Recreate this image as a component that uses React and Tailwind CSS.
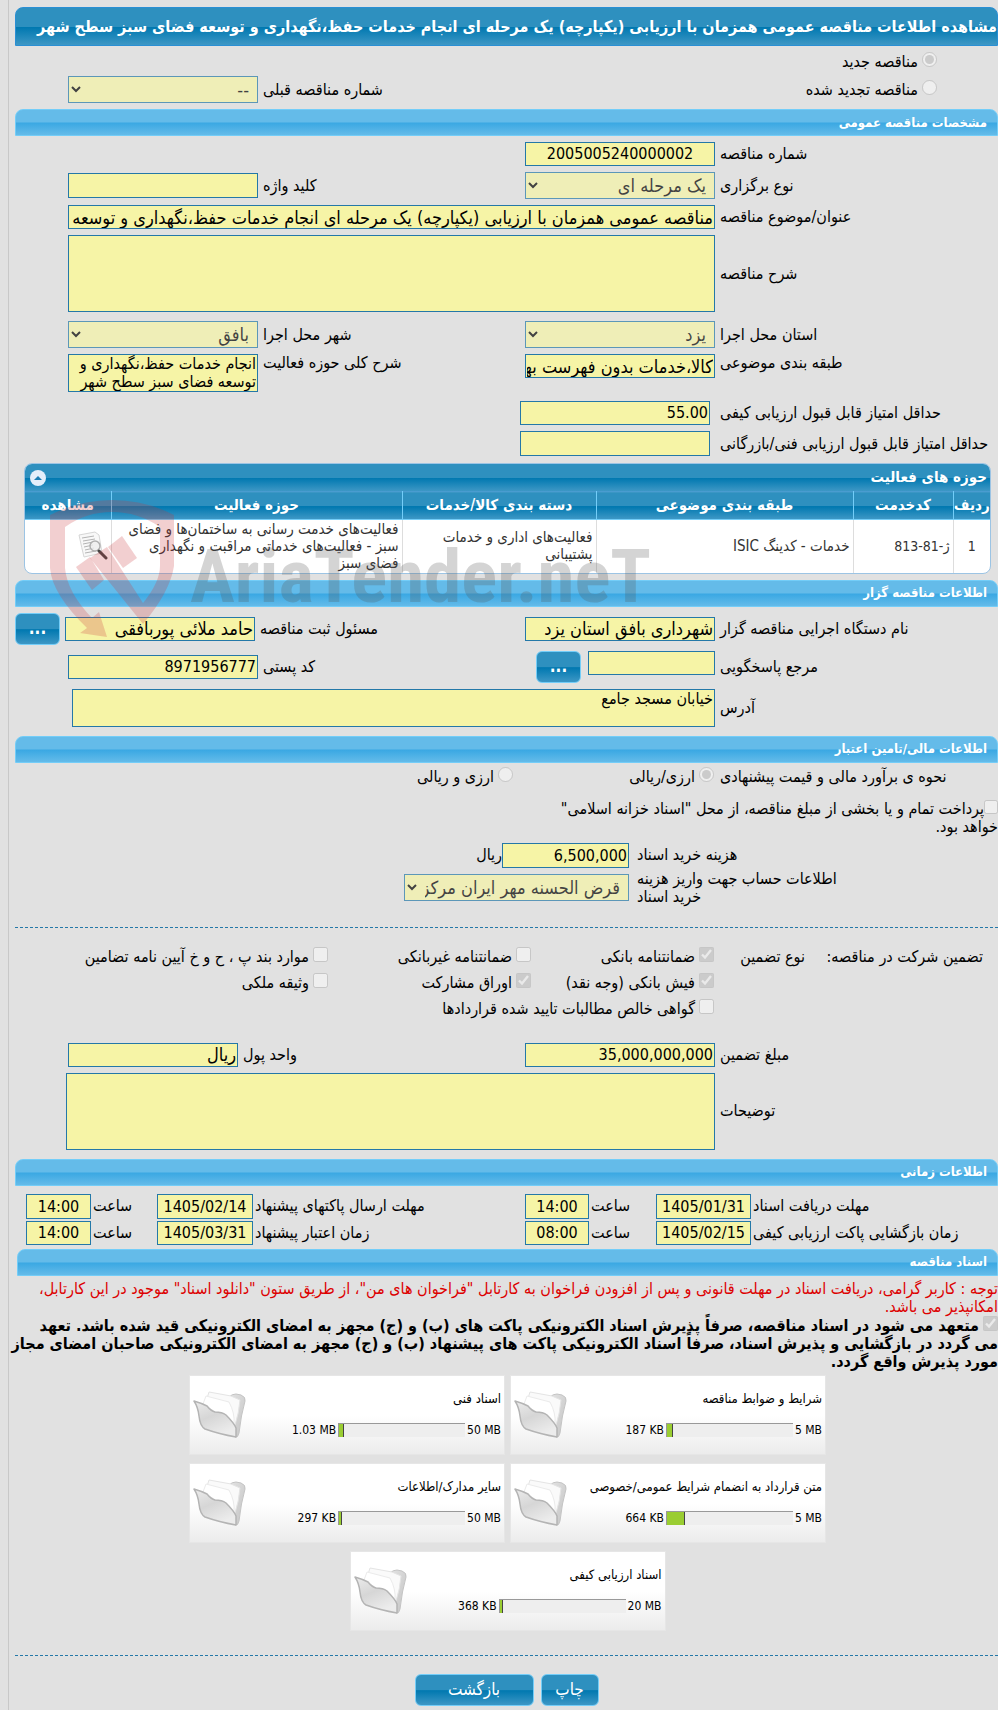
import React from 'react';

const fieldClass = 'block w-full min-w-0 border border-[#2478a8] bg-[#f6f4a6] px-px text-black outline-none';

const TextField = ({ id, value = '', className = 'h-6', align = 'text-right', dir = 'rtl', size = 'text-[16px]' }) => (
    <input id={id} type="text" dir={dir} readOnly value={value} className={`${fieldClass} ${align} ${size} ${className}`} />
);

const TextArea = ({ id, value = '', className = '' }) => (
    <textarea id={id} readOnly value={value} className={`${fieldClass} resize-none overflow-hidden text-[16px] leading-[18px] ${className}`} />
);

const SelectField = ({ id, value }) => (
    <select id={id} disabled className="block h-[27px] w-full border border-[#2478a8] bg-[#f6f4a6] px-1 text-[18px] leading-6 text-black opacity-70">
        <option>{value}</option>
    </select>
);

const Label = ({ htmlFor, children, className = '' }) => (
    <label htmlFor={htmlFor} className={`block text-left text-[16px] leading-[18px] whitespace-nowrap ${className}`}>{children}</label>
);

const Check = ({ type = 'checkbox', name, checked = false, children, className = '' }) => (
    <label className={`flex items-start gap-1 text-[16px] leading-[18px] ${className}`}>
        <input type={type} name={name} disabled defaultChecked={checked} className="size-[15px] shrink-0" />
        <span className="pt-px whitespace-nowrap">{children}</span>
    </label>
);

const SectionBar = ({ children, className = '' }) => (
    <h2 className={`flex h-[27px] items-center rounded-t-lg border border-[#73cdf8] bg-[linear-gradient(to_bottom,#64bbe9_0%,#64bbe9_48%,#3aa8e3_52%,#64bbe9_100%)] pr-2.5 text-[13px] font-bold text-white ${className}`}>
        {children}
    </h2>
);

const blueFill = 'bg-[linear-gradient(to_bottom,#2e90bf_0%,#2e90bf_50%,#0078b0_52%,#3d97c5_100%)]';

const BlueButton = ({ children, className = '', ...props }) => (
    <button type="button" className={`h-8 rounded-md border border-[#73cdf8] text-[17px] text-white ${blueFill} ${className}`} {...props}>
        {children}
    </button>
);

const FolderIcon = () => (
    <svg viewBox="0 0 53 48" className="h-12 w-[53px]" aria-hidden="true">
        <defs>
            <linearGradient id="folderFront" x1="0" y1="0" x2="0.5" y2="1">
                <stop offset="0" stopColor="#ececec" />
                <stop offset="0.5" stopColor="#d6d6d6" />
                <stop offset="1" stopColor="#ececec" />
            </linearGradient>
            <linearGradient id="folderBack" x1="0" y1="0" x2="1" y2="1">
                <stop offset="0" stopColor="#e4e4e4" />
                <stop offset="1" stopColor="#c4c4c4" />
            </linearGradient>
        </defs>
        <path d="M36 6 Q39 3 43 3 L48 4 Q53 6 52 10 Q48 24 46 42 Q45 47 42 46 L34 24Z" fill="url(#folderBack)" stroke="#c4c4c4" />
        <path d="M12 14 L16 1 L38 5 L47 9 Q46 22 42 34 L30 26Z" fill="#fafafa" stroke="#e4e4e4" />
        <path d="M10 13 L13 5 L36 11 Q42 22 41 33 L30 26Z" fill="#fff" stroke="#ebebeb" />
        <path d="M1 10 Q8 12 14 15 Q18 20 22 21 Q29 21 33 24 Q41 32 43 37 L43 46 Q26 43 12 38 Q7 35 6 25 Q5 16 1 10Z" fill="url(#folderFront)" stroke="#b4b4b4" strokeWidth="1.5" strokeLinejoin="round" />
    </svg>
);

const ViewIcon = () => (
    <svg viewBox="0 0 30 30" className="size-[30px]" aria-hidden="true">
        <path d="M1 4 L17 1 L21 4 L24 22 L6 26 Q4 18 1 4Z" fill="#f8f8f8" stroke="#d6d6d6" />
        <path d="M4 7l12-2M5 10l12-2M5 13l10-2M6 16l9-2M7 19l9-2M7 22l11-2" stroke="#b4b4b4" />
        <circle cx="17" cy="15" r="5" fill="#eeeeeecc" stroke="#b0b0b0" strokeWidth="1.5" />
        <path d="M21 20L28 27" stroke="#444" strokeWidth="3" strokeLinecap="round" />
    </svg>
);

const Watermark = () => (
    <svg viewBox="0 0 620 140" className="pointer-events-none absolute top-[37px] left-[35px] h-[140px] w-[620px]" aria-hidden="true">
        <g fill="#c8363c" fillOpacity="0.24">
            <path d="M0 15 Q30 0 62 0 Q95 0 124 15 L124 66 Q120 92 93 124 L40 58 L57 47 L93 103 Q110 82 110 66 L110 27 Q88 12 62 12 Q36 12 15 27 L15 68 Q17 92 42 118 L49 112 L57 137 L30 133 L37 128 Q2 94 0 68Z" />
            <path d="M58 47 L72 36 L87 58 L73 68Z" />
            <path d="M26 67 L40 57 L54 80 L42 90Z" />
        </g>
        <text x="140" y="102" direction="ltr" textAnchor="start" fontSize="75" className="font-['Liberation_Sans_Narrow','Roboto_Condensed',sans-serif] font-bold" fill="#555" fillOpacity="0.25">AriaTender.neT</text>
    </svg>
);

const activityHead = ['ردیف', 'کدخدمت', 'طبقه بندی موضوعی', 'دسته بندی کالا/خدمات', 'حوزه فعالیت', 'مشاهده'];

const documents = [
    { title: 'شرایط و ضوابط مناقصه', limit: '5 MB', size: '187 KB', percent: 5 },
    { title: 'اسناد فنی', limit: '50 MB', size: '1.03 MB', percent: 4 },
    { title: 'متن قرارداد به انضمام شرایط عمومی/خصوصی', limit: '5 MB', size: '664 KB', percent: 14 },
    { title: 'سایر مدارک/اطلاعات', limit: '50 MB', size: '297 KB', percent: 2 },
    { title: 'اسناد ارزیابی کیفی', limit: '20 MB', size: '368 KB', percent: 3 },
];

const DocumentCard = ({ title, limit, size, percent }) => (
    <article className="flex h-20 w-[316px] items-center justify-between border border-[#e6e6e6] bg-linear-to-b from-white from-50% to-[#ececec] px-[3px]">
        <div className="flex flex-col gap-[15px] text-[12px] leading-4">
            <h3 className="text-[13px] leading-4">{title}</h3>
            <div className="flex items-center gap-[2px]">
                <span dir="ltr" className="whitespace-nowrap">{limit}</span>
                <div role="meter" aria-label={title} aria-valuenow={percent} dir="ltr" className="h-3.5 w-[127px] border-t border-l border-[#999] bg-[#eee]">
                    <div className="h-full border-r border-[#444] bg-[#9acd32]" style={{ width: `${percent}%` }} />
                </div>
                <span dir="ltr" className="whitespace-nowrap">{size}</span>
            </div>
        </div>
        <FolderIcon />
    </article>
);

const formGrid = 'grid grid-cols-[278px_190px_1fr_190px] gap-x-[5px] pl-[53px]';

const App = () => {
    return (
        <div dir="rtl" className="overflow-hidden bg-[#e1e1e1] pl-2 font-['DejaVu_Sans_Condensed','DejaVu_Sans',sans-serif] text-black">
            <main className="border-l border-[#c8c8c8] pt-[7px] pb-1 pl-1.5">
                <h1 className={`flex h-[39px] items-center rounded-t-lg border border-[#2a8fd4] text-[16px] font-bold whitespace-nowrap text-white ${blueFill}`}>
                    مشاهده اطلاعات مناقصه عمومی همزمان با ارزیابی (یکپارچه) یک مرحله ای انجام خدمات حفظ،نگهداری و توسعه فضای سبز سطح شهر
                </h1>

                {/* Tender kind */}
                <div className={`${formGrid} h-[63px] items-end pb-1.5`}>
                    <div className="col-span-2 flex flex-col gap-[9px] self-start pt-1.5 pr-[61px]">
                        <Check type="radio" name="kind" checked>مناقصه جدید</Check>
                        <Check type="radio" name="kind">مناقصه تجدید شده</Check>
                    </div>
                    <Label htmlFor="prevNumber" className="pb-1">شماره مناقصه قبلی</Label>
                    <SelectField id="prevNumber" value="--" />
                </div>

                <SectionBar>مشخصات مناقصه عمومی</SectionBar>
                <div className={`${formGrid} items-center gap-y-1.5 pt-1.5`}>
                    <Label htmlFor="number">شماره مناقصه</Label>
                    <TextField id="number" value="2005005240000002" align="text-center" />
                    <span className="col-span-2" />
                    <Label htmlFor="method">نوع برگزاری</Label>
                    <SelectField id="method" value="یک مرحله ای" />
                    <Label htmlFor="keyword">کلید واژه</Label>
                    <TextField id="keyword" className="h-[25px]" />
                    <Label htmlFor="subject">عنوان/موضوع مناقصه</Label>
                    <div className="col-span-3">
                        <TextField id="subject" size="text-[18px]" value="مناقصه عمومی همزمان با ارزیابی (یکپارچه) یک مرحله ای انجام خدمات حفظ،نگهداری و توسعه فضای سبز سطح شهر" />
                    </div>
                    <Label htmlFor="description">شرح مناقصه</Label>
                    <div className="col-span-3">
                        <TextArea id="description" className="h-[77px]" />
                    </div>
                </div>

                <div className={`${formGrid} items-center gap-y-1.5 pt-[9px]`}>
                    <Label htmlFor="province">استان محل اجرا</Label>
                    <SelectField id="province" value="یزد" />
                    <Label htmlFor="city">شهر محل اجرا</Label>
                    <SelectField id="city" value="بافق" />
                    <Label htmlFor="category" className="self-start">طبقه بندی موضوعی</Label>
                    <TextField id="category" size="text-[18px]" className="h-6 self-start" value="کالا،خدمات بدون فهرست بها" />
                    <Label htmlFor="scope" className="self-start">شرح کلی حوزه فعالیت</Label>
                    <TextArea id="scope" className="h-[38px]" value="انجام خدمات حفظ،نگهداری و توسعه فضای سبز سطح شهر" />
                </div>

                <div className="grid grid-cols-[278px_190px] items-center gap-x-2.5 gap-y-1.5 pt-[9px] pb-[7px]">
                    <Label htmlFor="minQuality">حداقل امتیاز قابل قبول ارزیابی کیفی</Label>
                    <TextField id="minQuality" value="55.00" />
                    <Label htmlFor="minTechnical">حداقل امتیاز قابل قبول ارزیابی فنی/بازرگانی</Label>
                    <TextField id="minTechnical" className="h-[25px]" />
                </div>

                {/* Activity areas */}
                <section className="relative">
                    <div className="mr-[7px] ml-[9px] overflow-hidden rounded-lg border border-[#9cc4e4] bg-white">
                        <div className={`flex h-[27px] items-center justify-between pr-[3px] pl-[5px] text-white ${blueFill}`}>
                            <h2 className="text-[15px] font-bold">حوزه های فعالیت</h2>
                            <button type="button" aria-label="بستن" className="flex size-4 items-center justify-center rounded-full bg-[#e4eefa]">
                                <svg viewBox="0 0 8 4" className="h-1 w-2"><path d="M0 4L4 0L8 4Z" fill="#1c7db4" /></svg>
                            </button>
                        </div>
                        <table className="w-full table-fixed border-collapse text-[15px] leading-[17px] text-[#333]">
                            <colgroup>
                                <col className="w-[37px]" />
                                <col className="w-[100px]" />
                                <col className="w-[257px]" />
                                <col className="w-[194px]" />
                                <col />
                                <col className="w-[86px]" />
                            </colgroup>
                            <thead>
                                <tr className={`h-7 border-t border-b border-t-[#4a9cd0] border-b-[#73cdf8] text-white ${blueFill}`}>
                                    {activityHead.map(head => (
                                        <th key={head} className="border-l border-[#73cdf8] font-bold whitespace-nowrap last:border-l-0">{head}</th>
                                    ))}
                                </tr>
                            </thead>
                            <tbody>
                                <tr className="h-[53px]">
                                    <td className="border-l border-[#ddd] text-center text-[14px]">1</td>
                                    <td className="border-l border-[#ddd] pr-[3px] text-[14px]">ژ-81-813</td>
                                    <td className="border-l border-[#ddd] pr-[3px]">خدمات - کدینگ ISIC</td>
                                    <td className="border-l border-[#ddd] pr-[3px] pl-6">فعالیت‌های اداری و خدمات پشتیبانی</td>
                                    <td className="border-l border-[#ddd] pr-[3px] pl-2">فعالیت‌های خدمت رسانی به ساختمان‌ها و فضای سبز - فعالیت‌های خدماتی مراقبت و نگهداری فضای سبز</td>
                                    <td className="pr-[3px]">
                                        <button type="button" aria-label="مشاهده" className="block"><ViewIcon /></button>
                                    </td>
                                </tr>
                            </tbody>
                        </table>
                    </div>
                    <Watermark />
                </section>

                <SectionBar className="mt-1.5">اطلاعات مناقصه گزار</SectionBar>
                <div className="grid grid-cols-[278px_190px_1fr_190px_45px] items-center gap-x-[5px] pt-1.5">
                    <Label htmlFor="agency">نام دستگاه اجرایی مناقصه گزار</Label>
                    <TextField id="agency" size="text-[18px]" value="شهرداری بافق استان یزد" />
                    <Label htmlFor="registrar">مسئول ثبت مناقصه</Label>
                    <TextField id="registrar" size="text-[18px]" value="حامد ملائی پوربافقی" />
                    <BlueButton className="font-bold" aria-label="انتخاب مسئول">...</BlueButton>
                </div>
                <div className={`${formGrid} items-center pt-1.5`}>
                    <Label htmlFor="responder">مرجع پاسخگویی</Label>
                    <div className="flex items-start gap-[7px]">
                        <div className="w-[127px]"><TextField id="responder" /></div>
                        <BlueButton className="w-[45px] font-bold" aria-label="انتخاب مرجع">...</BlueButton>
                    </div>
                    <Label htmlFor="postal">کد پستی</Label>
                    <TextField id="postal" value="8971956777" />
                </div>
                <div className="grid grid-cols-[278px_1fr] items-center gap-x-[5px] pt-1.5 pb-[9px] pl-[57px]">
                    <Label htmlFor="address">آدرس</Label>
                    <TextArea id="address" className="h-[38px]" value="خیابان مسجد جامع" />
                </div>

                <SectionBar>اطلاعات مالی/تامین اعتبار</SectionBar>
                <div className="flex items-start pt-1">
                    <span className="w-[278px] pt-px text-left text-[16px] leading-[18px] whitespace-nowrap">نحوه ی برآورد مالی و قیمت پیشنهادی</span>
                    <Check type="radio" name="currency" checked className="mr-1.5 w-[201px]">ارزی/ریالی</Check>
                    <Check type="radio" name="currency">ارزی و ریالی</Check>
                </div>
                <label className="block w-[470px] pt-3.5 text-[16px] leading-[18px]">
                    <input type="checkbox" disabled className="size-[14px]" />
                    پرداخت تمام و یا بخشی از مبلغ مناقصه، از محل "اسناد خزانه اسلامی" خواهد بود.
                </label>
                <div className="grid grid-cols-[361px_225px] items-center gap-x-2 gap-y-[2px] pt-[7px] pb-[21px]">
                    <Label htmlFor="price">هزینه خرید اسناد</Label>
                    <div className="flex items-center">
                        <div className="w-[127px]"><TextField id="price" className="h-[25px]" value="6,500,000" /></div>
                        <span className="text-[16px] leading-[18px]">ریال</span>
                    </div>
                    <div className="flex justify-end">
                        <label htmlFor="account" className="w-[210px] text-[16px] leading-[18px]">
                            <span className="block text-left">اطلاعات حساب جهت واریز هزینه</span>
                            <span className="block text-left">خرید اسناد</span>
                        </label>
                    </div>
                    <SelectField id="account" value="قرض الحسنه مهر ایران مرکزی" />
                </div>

                <hr className="border-dashed border-[#2478a8]" />
                <div className="grid grid-cols-[178px_106px_183px_203px_1fr] gap-y-[7px] pt-[19px]">
                    <span className="pt-px pr-[15px] text-[16px] leading-[18px] whitespace-nowrap">تضمین شرکت در مناقصه:</span>
                    <span className="pt-px pr-[15px] text-[16px] leading-[18px]">نوع تضمین</span>
                    <Check checked>ضمانتنامه بانکی</Check>
                    <Check>ضمانتنامه غیربانکی</Check>
                    <Check>موارد بند پ ، ح و خ آیین نامه تضامین</Check>
                    <Check checked className="col-start-3">فیش بانکی (وجه نقد)</Check>
                    <Check checked>اوراق مشارکت</Check>
                    <Check>وثیقه ملکی</Check>
                    <Check className="col-span-3 col-start-3">گواهی خالص مطالبات تایید شده قراردادها</Check>
                </div>
                <div className="grid grid-cols-[278px_190px_1fr_170px] items-center gap-x-[5px] pt-[25px] pl-[53px]">
                    <Label htmlFor="amount">مبلغ تضمین</Label>
                    <TextField id="amount" value="35,000,000,000" />
                    <Label htmlFor="unit">واحد پول</Label>
                    <TextField id="unit" size="text-[18px]" value="ریال" />
                </div>
                <div className="grid grid-cols-[278px_1fr] items-center gap-x-[5px] pt-1.5 pb-[9px] pl-[51px]">
                    <Label htmlFor="remarks">توضیحات</Label>
                    <TextArea id="remarks" className="h-[77px]" />
                </div>

                <SectionBar>اطلاعات زمانی</SectionBar>
                <div className="grid grid-cols-[245px_95px_63px_64px_1fr_96px_62px_65px] items-center gap-x-[2px] gap-y-[2px] pt-2 pb-1 pl-[11px]">
                    <Label htmlFor="docDate">مهلت دریافت اسناد</Label>
                    <TextField id="docDate" dir="ltr" align="text-center" className="h-[25px]" value="1405/01/31" />
                    <Label htmlFor="docTime">ساعت</Label>
                    <TextField id="docTime" dir="ltr" align="text-center" className="h-[25px]" value="14:00" />
                    <Label htmlFor="sendDate">مهلت ارسال پاکتهای پیشنهاد</Label>
                    <TextField id="sendDate" dir="ltr" align="text-center" className="h-[25px]" value="1405/02/14" />
                    <Label htmlFor="sendTime">ساعت</Label>
                    <TextField id="sendTime" dir="ltr" align="text-center" className="h-[25px]" value="14:00" />
                    <Label htmlFor="openDate">زمان بازگشایی پاکت ارزیابی کیفی</Label>
                    <TextField id="openDate" dir="ltr" align="text-center" value="1405/02/15" />
                    <Label htmlFor="openTime">ساعت</Label>
                    <TextField id="openTime" dir="ltr" align="text-center" value="08:00" />
                    <Label htmlFor="validDate">زمان اعتبار پیشنهاد</Label>
                    <TextField id="validDate" dir="ltr" align="text-center" value="1405/03/31" />
                    <Label htmlFor="validTime">ساعت</Label>
                    <TextField id="validTime" dir="ltr" align="text-center" value="14:00" />
                </div>

                {/* Tender documents */}
                <div className="pl-0.5">
                    <SectionBar>اسناد مناقصه</SectionBar>
                    <p className="pt-1 text-[16px] leading-[18px] text-[#dd0000]">
                        توجه : کاربر گرامی، دریافت اسناد در مهلت قانونی و پس از افزودن فراخوان به کارتابل "فراخوان های من"، از طریق ستون "دانلود اسناد" موجود در این کارتابل، امکانپذیر می باشد.
                    </p>
                    <label className="block text-[16px] leading-[18px] font-bold">
                        <input type="checkbox" disabled defaultChecked className="ml-1 size-[15px]" />
                        متعهد می شود در اسناد مناقصه، صرفاً پذیرش اسناد الکترونیکی پاکت های (ب) و (ج) مجهز به امضای الکترونیکی قید شده باشد. تعهد{' '}
                        <span className="block whitespace-nowrap">می گردد در بازگشایی و پذیرش اسناد، صرفاً اسناد الکترونیکی پاکت های پیشنهاد (ب) و (ج) مجهز به امضای الکترونیکی صاحبان امضای مجاز</span>
                        مورد پذیرش واقع گردد.
                    </label>
                    <div className="mx-auto flex max-w-[700px] flex-wrap justify-center gap-x-[5px] gap-y-2 pt-1 pb-6">
                        {documents.map(doc => (
                            <DocumentCard key={doc.title} {...doc} />
                        ))}
                    </div>
                </div>

                <hr className="border-dashed border-[#2478a8]" />
                <div className="flex justify-center gap-[7px] pt-[18px]">
                    <BlueButton className="w-[58px]">چاپ</BlueButton>
                    <BlueButton className="w-[119px]">بازگشت</BlueButton>
                </div>
            </main>
        </div>
    );
};

export default App;
